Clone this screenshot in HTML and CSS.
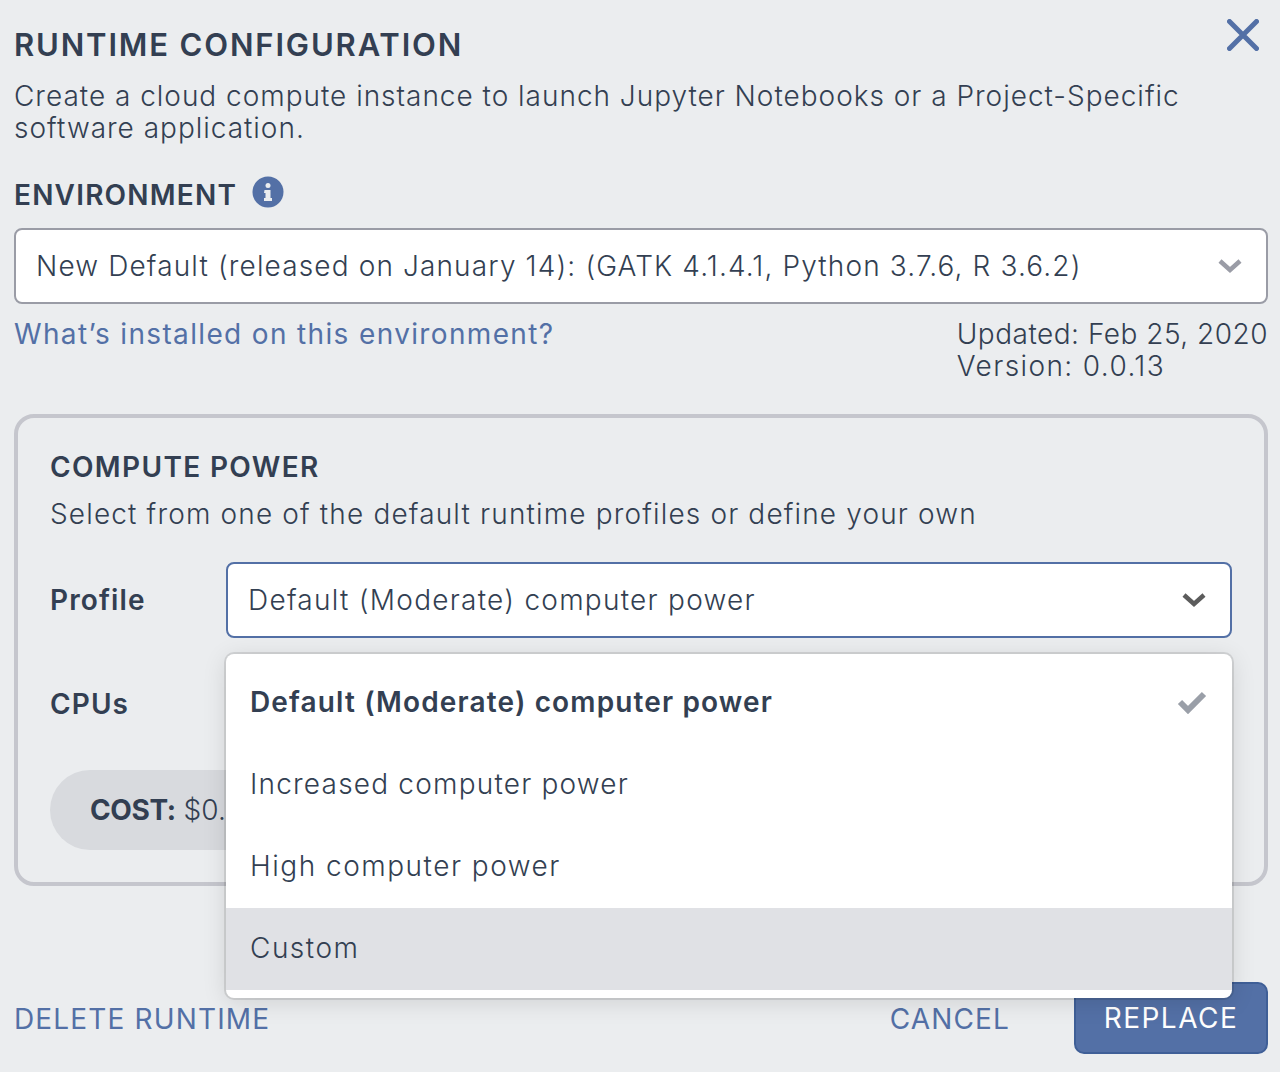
FILE: index.html
```html
<!DOCTYPE html>
<html lang="en">
<head>
    <meta charset="UTF-8">
    <title>Runtime Configuration</title>
    <link rel="stylesheet" href="styles.css">
</head>
<body>
    <div class="panel">
        <div class="title-row">
            <div class="title">RUNTIME CONFIGURATION</div>
            <svg class="close-icon" width="32" height="32" viewBox="0 0 32 32">
                <path d="M2.5 2.5 L29.5 29.5 M29.5 2.5 L2.5 29.5" />
            </svg>
        </div>
        <div class="intro">Create a cloud compute instance to launch Jupyter Notebooks or a Project-Specific software application.</div>

        <div class="env-label">
            <span>ENVIRONMENT</span>
            <svg class="info-icon" width="32" height="32" viewBox="0 0 32 32">
                <circle cx="16" cy="16" r="15.5" />
                <rect class="info-glyph" x="13.5" y="7" width="5" height="5" rx="2.5" />
                <path class="info-glyph" d="M12.5 14 h6 v8 h1.5 v3 h-8 v-3 h1.5 v-5 h-1.5 z" />
            </svg>
        </div>
        <div class="select select-env">
            <span>New Default (released on January 14): (GATK 4.1.4.1, Python 3.7.6, R 3.6.2)</span>
            <svg class="chevron chevron-light" width="24" height="16" viewBox="0 0 24 16">
                <path d="M2 3 L12 12 L22 3" />
            </svg>
        </div>
        <div class="env-info">
            <a class="link">What’s installed on this environment?</a>
            <div class="env-version">
                <div>Updated: Feb 25, 2020</div>
                <div class="version-line">Version: 0.0.13</div>
            </div>
        </div>

        <div class="compute-box">
            <div class="compute-title">COMPUTE POWER</div>
            <div class="compute-desc">Select from one of the default runtime profiles or define your own</div>
            <div class="form-row">
                <div class="form-label">Profile</div>
                <div class="select select-profile">
                    <span>Default (Moderate) computer power</span>
                    <svg class="chevron chevron-dark" width="24" height="16" viewBox="0 0 24 16">
                        <path d="M2 3 L12 12 L22 3" />
                    </svg>
                </div>
            </div>
            <div class="form-label cpu-label">CPUs</div>
            <div class="cost-pill"><b>COST:</b> $0.</div>

            <div class="menu">
                <div class="menu-item selected">
                    <span>Default (Moderate) computer power</span>
                    <svg class="check-icon" width="30" height="24" viewBox="0 0 30 24">
                        <path d="M3 12 L11 20 L27 4" />
                    </svg>
                </div>
                <div class="menu-item">Increased computer power</div>
                <div class="menu-item item-wide">High computer power</div>
                <div class="menu-item item-wide focused">Custom</div>
            </div>
        </div>

        <div class="footer">
            <a class="link-btn">DELETE RUNTIME</a>
            <div class="footer-right">
                <a class="link-btn">CANCEL</a>
                <button class="primary-btn">REPLACE</button>
            </div>
        </div>
    </div>
</body>
</html>
```

FILE: styles.css
```css
* {
    box-sizing: border-box;
}

body {
    margin: 0;
    background-color: #ebedef;
    color: #333f52;
    font-family: 'Inter', 'Liberation Sans', sans-serif;
    font-size: 28px;
    line-height: 32px;
}

.panel {
    padding: 0 12px 0 14px;
    height: 1072px;
    overflow: hidden;
}

.title-row {
    display: flex;
    justify-content: space-between;
    padding-top: 29px;
    height: 80px;
}

.title {
    font-size: 31px;
    font-weight: 600;
    letter-spacing: 1.85px;
}

.close-icon {
    margin: -10px 9px 0 0;
}

.close-icon path {
    stroke: #5370a6;
    stroke-width: 5;
    stroke-linecap: round;
    fill: none;
}

.intro {
    font-weight: 300;
    letter-spacing: 0.98px;
    max-width: 1200px;
}

.env-label {
    display: flex;
    align-items: center;
    gap: 15px;
    margin-top: 34px;
    height: 34px;
    font-weight: 600;
    letter-spacing: 1.2px;
}

.info-icon {
    margin-top: -6px;
}

.info-icon circle {
    fill: #5370a6;
}

.info-glyph {
    fill: #ebedef;
}

.select {
    display: flex;
    justify-content: space-between;
    align-items: center;
    height: 76px;
    background: #fff;
    border-radius: 8px;
    padding: 0 24px 0 20px;
    font-weight: 300;
}

.select-env {
    margin-top: 16px;
    border: 2px solid #9a9ca6;
    letter-spacing: 1.13px;
}

.select-profile {
    flex: 1;
    border: 2px solid #5370a6;
    letter-spacing: 1.26px;
}

.chevron path {
    fill: none;
    stroke-width: 4.5;
}

.chevron-light path {
    stroke: #9a9ca6;
}

.chevron-dark path {
    stroke: #5c5c5c;
}

.env-info {
    display: flex;
    justify-content: space-between;
    margin-top: 14px;
}

.link {
    color: #5370a6;
    font-weight: 400;
    letter-spacing: 1.35px;
}

.env-version {
    font-weight: 300;
    letter-spacing: 0.5px;
}

.version-line {
    letter-spacing: 1.4px;
}

.compute-box {
    position: relative;
    margin-top: 32px;
    height: 472px;
    border: 4px solid #c5c6cd;
    border-radius: 20px;
    padding: 33px 32px 0;
}

.compute-title {
    font-weight: 600;
    letter-spacing: 1.35px;
}

.compute-desc {
    margin-top: 15px;
    font-weight: 300;
    letter-spacing: 1.15px;
}

.form-row {
    display: flex;
    align-items: center;
    margin-top: 32px;
}

.form-label {
    width: 176px;
    font-weight: 600;
    letter-spacing: 1.1px;
}

.cpu-label {
    margin-top: 50px;
}

.cost-pill {
    margin-top: 50px;
    height: 80px;
    width: 400px;
    border-radius: 40px;
    background: #d8dade;
    padding: 0 40px;
    line-height: 80px;
    font-weight: 300;
}

.cost-pill b {
    font-weight: 700;
    letter-spacing: -0.4px;
}

.menu {
    position: absolute;
    left: 208px;
    top: 236px;
    width: 1006px;
    padding: 8px 0;
    background: #fff;
    border-radius: 8px;
    box-shadow: 0 0 0 2px rgba(0, 0, 0, 0.1), 0 4px 24px rgba(0, 0, 0, 0.12);
}

.menu-item {
    display: flex;
    justify-content: space-between;
    align-items: center;
    height: 82px;
    padding: 0 24px 2px;
    font-weight: 300;
    letter-spacing: 1.2px;
}

.item-wide {
    letter-spacing: 1.5px;
}

.selected {
    font-weight: 600;
    letter-spacing: 1.14px;
}

.focused {
    background: #e0e1e5;
}

.check-icon {
    margin-right: 1px;
}

.check-icon path {
    fill: none;
    stroke: #9a9fa8;
    stroke-width: 6;
}

.footer {
    display: flex;
    justify-content: space-between;
    align-items: center;
    margin-top: 96px;
}

.footer-right {
    display: flex;
    align-items: center;
    gap: 64px;
}

.link-btn {
    color: #5370a6;
    font-weight: 400;
    letter-spacing: 1.15px;
    padding-top: 1px;
}

.primary-btn {
    width: 194px;
    height: 72px;
    background: #5370a6;
    border: 2px solid #3f5f97;
    border-radius: 10px;
    color: #fff;
    font-family: inherit;
    font-size: 28px;
    letter-spacing: 1.5px;
}
```
